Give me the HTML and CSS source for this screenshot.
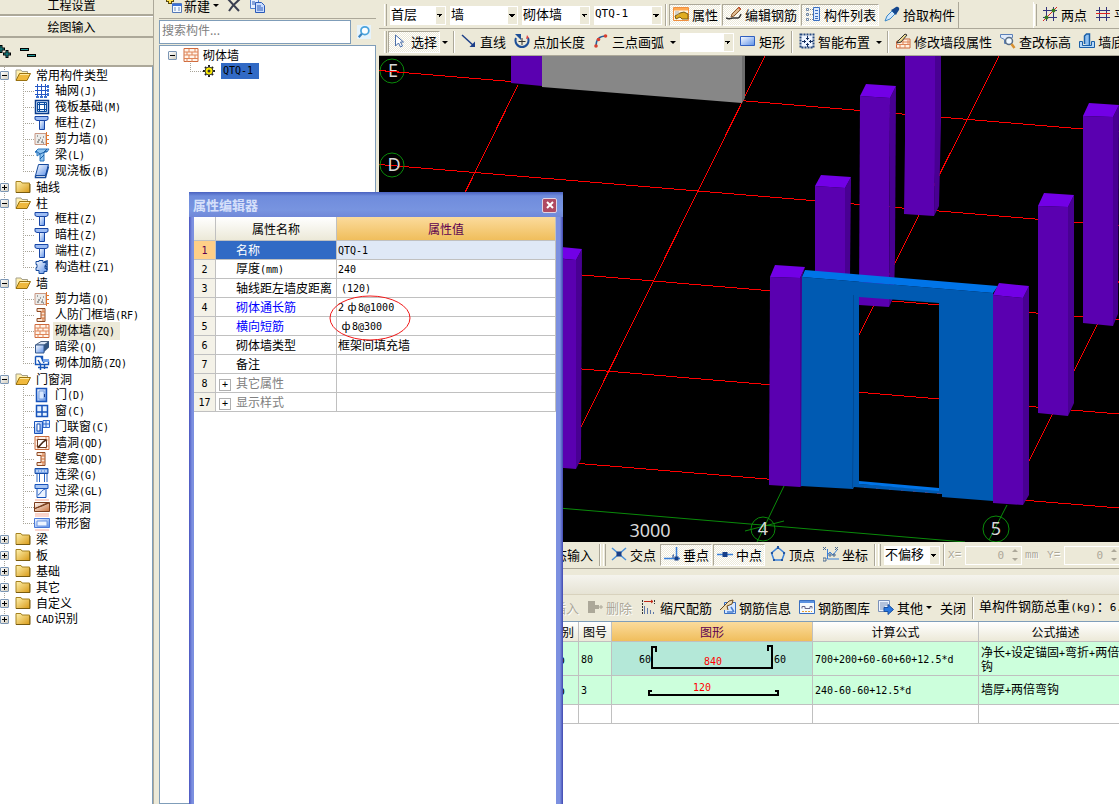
FILE: index.html
```
<!DOCTYPE html>
<html lang="zh-CN">
<head>
  <meta charset="UTF-8">
  <meta name="viewport" content="width=device-width, initial-scale=1.0">
  <title>绘图输入</title>
  <link rel="stylesheet" href="styles.css">
</head>
<body>
  <svg class="defs" aria-hidden="true">
    <defs>
      <linearGradient id="gold" x1="0" y1="0" x2="1" y2="1"><stop offset="0" stop-color="#fff3b0"/><stop offset="1" stop-color="#d89a18"/></linearGradient>
      <linearGradient id="blue" x1="0" y1="0" x2="1" y2="1"><stop offset="0" stop-color="#ffffff"/><stop offset="1" stop-color="#5a8fe8"/></linearGradient>
      <linearGradient id="brown" x1="0" y1="0" x2="1" y2="1"><stop offset="0" stop-color="#ffffff"/><stop offset="1" stop-color="#c8703a"/></linearGradient>
    </defs>
    <symbol id="folder" viewBox="0 0 16 16"><path d="M1 4V2.500h5l1 1.500h7.500v9.500H1z" fill="url(#gold)" stroke="#a5811f"/><path d="M1 13.500h14V5" fill="none" stroke="#7a5c10"/></symbol>
    <symbol id="folder-open" viewBox="0 0 16 16"><path d="M1 13V3h5l1 1.500h5.500V7" fill="#fff0b0" stroke="#a5a08a"/><path d="M1 13.500L4.500 6.500H15.500L12 13.500z" fill="#f0b93c" stroke="#9a7210"/><path d="M5 7.500h9" stroke="#ffe9a0"/></symbol>
    <symbol id="axis" viewBox="0 0 16 16"><path d="M3.500 1v13M7.500 1v13M11.500 1v13M1 3.500h12M1 7.500h12M1 11.500h12" stroke="#2457c5" fill="none"/><path d="M13 2h2v3h-2zM13 6h2v3h-2zM13 10h2v3h-2zM2 13h3v2H2zM6 13h3v2H6zM10 13h3v2h-3z" fill="#3a6fd0"/></symbol>
    <symbol id="raft" viewBox="0 0 16 16"><path d="M1.500 1.500h13v13h-13z" fill="#d9e8fc" stroke="#0a3c8c" stroke-width="1.500"/><path d="M5.500 3v10M10.500 3v10M3 5.500h10M3 10.500h10M3.500 3.500h9v9h-9z" fill="none" stroke="#0a4ca0"/><path d="M6 6h4v4H6z" fill="#fff"/></symbol>
    <symbol id="column" viewBox="0 0 16 16"><path d="M1 1.500h13v3l-2 1H3l-2-1z" fill="#9cbcf4" stroke="#1745a5"/><path d="M5.500 5.500h5v9h-5z" fill="url(#blue)" stroke="#1745a5"/></symbol>
    <symbol id="shear" viewBox="0 0 16 16"><path d="M1 2.500h11v11H1z" fill="#ececea" stroke="#c99884"/><path d="M3 5h1M6 7h1M4 9h2M8 9h1M3 11h2M7 11h2M9 6h1M9 12h1" stroke="#555"/><path d="M12.500 1v14M12 4.500h3M12 8.500h3M12 12.500h3" stroke="#e07830"/></symbol>
    <symbol id="beam" viewBox="0 0 16 16"><path d="M1 5l3-3h11l-2 3h-3v9H6V7L3 9V6z" fill="#8ec4f0" stroke="#2c78c0"/><path d="M2 4l4 3 7-3M10 5l3-3M6 12l4-4" fill="none" stroke="#1c60a8"/></symbol>
    <symbol id="slab" viewBox="0 0 16 16"><path d="M4.500 1.500h10l-3 11h-10z" fill="url(#blue)" stroke="#164a9c"/><path d="M1.500 12.500v2h10l3-11" fill="none" stroke="#164a9c" stroke-width="1.500"/></symbol>
    <symbol id="tie-column" viewBox="0 0 16 16"><path d="M5 1.500h4v2h3v3h-1v3h2v3h-3v2H5v-3H2v-3h1v-3H2v-3h3z" fill="url(#blue)" stroke="#174a9c"/><path d="M10 3l3-1v4M11 8l2-1v4" fill="none" stroke="#174a9c" stroke-width="1.500"/></symbol>
    <symbol id="niche" viewBox="0 0 16 16"><path d="M3 1.500h8v13H3v-3h4v-7H3z" fill="#fbe3d0" stroke="#8f4a24"/><path d="M7 5h4M7 8h4M7 11h4M9 2v3M9 11v3" stroke="#d27038"/></symbol>
    <symbol id="brick" viewBox="0 0 16 16"><path d="M1 1.500h14v13H1z" fill="#fff4ea" stroke="#cf6a3c"/><path d="M1 5h14M1 8h14M1 11.500h14M6 2v3M12 2v3M4 5v3M9 5v3M6 8v3M12 8v3M4 12v3M9 12v3" stroke="#df8558"/></symbol>
    <symbol id="dark-beam" viewBox="0 0 16 16"><path d="M1.500 6L7 2.500h8L10 6z" fill="#dbe6f5" stroke="#4a607e"/><path d="M10 6l5-3.500v6L10 13z" fill="#33547e"/><path d="M1.500 6H10v8H1.500z" fill="url(#blue)" stroke="#35588c"/></symbol>
    <symbol id="masonry-bar" viewBox="0 0 16 16"><path d="M1.500 1.500h7v4h6M1.500 1.500v8h13v-4M4 5l3 5M7 2l3 6M6.500 9v6M10.500 9v5M4 12.500h10" fill="none" stroke="#1554b8" stroke-width="1.400"/><path d="M9 4h6v3H9z" fill="#6fa0ea"/></symbol>
    <symbol id="door" viewBox="0 0 16 16"><path d="M2.500 1.500h10v13h-10z" fill="url(#blue)" stroke="#1753bb" stroke-width="1.500"/><path d="M5 4h5v8H5z" fill="#d8e8ff" stroke="#78a0e0"/><path d="M10.500 7v3" stroke="#173c8c"/></symbol>
    <symbol id="window" viewBox="0 0 16 16"><path d="M2.500 2.500h11v11h-11z" fill="#e6f2ff" stroke="#1753bb" stroke-width="1.500"/><path d="M8 3v10M3 9h10" stroke="#1753bb" stroke-width="1.500"/></symbol>
    <symbol id="door-window" viewBox="0 0 16 16"><path d="M.5 2.500h8v12h-8z" fill="url(#blue)" stroke="#1753bb"/><path d="M3 5h3v7H3z" fill="#fff" stroke="#1753bb"/><path d="M9 1.500h6.500v7H9zM12 2v6M9 5h6" fill="#dbeaff" stroke="#2a66cc"/></symbol>
    <symbol id="wall-hole" viewBox="0 0 16 16"><path d="M1 1.500h14v13H1z" fill="#fff2e8" stroke="#c96c3e"/><path d="M1 5h14M1 11h14M4 2v12M12 2v12" stroke="#e29a74"/><path d="M3.500 4.500h9v8h-9z" fill="#fff" stroke="#6a3a20"/><path d="M4 12c3-1 2-4 8-7" fill="none" stroke="#4a2a18" stroke-width="1.500"/></symbol>
    <symbol id="link-beam" viewBox="0 0 16 16"><path d="M1 1.500h13v5H1z" fill="#77a4e8" stroke="#1a4fa8"/><path d="M2 4h11" stroke="#fff" stroke-dasharray="2 1"/><path d="M3 7v8M5.500 7v8M10.500 7v8M13 7v8" stroke="#2a64c0"/></symbol>
    <symbol id="lintel" viewBox="0 0 16 16"><path d="M1 1.500h13v4H1z" fill="#a9c7f4" stroke="#1753bb"/><path d="M3 5.500h9v9H3z" fill="#eaf3ff" stroke="#1753bb"/><path d="M4 12c3-1 2-4 7-6" fill="none" stroke="#1753bb"/></symbol>
    <symbol id="strip-hole" viewBox="0 0 16 16"><path d="M1 1h14M1 15h14" stroke="#fbd3c8" stroke-width="2"/><path d="M.5 3.500h15v9H.5z" fill="url(#brown)" stroke="#7a3c1c"/><path d="M1 9.500L11 5l4-1.500V4L8 7z" fill="#7a4020" stroke="#7a4020"/></symbol>
    <symbol id="strip-window" viewBox="0 0 16 16"><path d="M1 1h14M1 15h14" stroke="#fbd6d0" stroke-width="2"/><path d="M.5 3.500h15v9H.5z" fill="url(#blue)" stroke="#4a78d8"/><path d="M3 6h10v5H3z" fill="#edf4ff" stroke="#6a94e4"/></symbol>
    <symbol id="gear" viewBox="0 0 12 12"><path d="M6 0v12M0 6h12M2 2l8 8M10 2l-8 8" stroke="#222" stroke-width="2"/><circle cx="6" cy="6" r="4" fill="#ffee00" stroke="#444"/><circle cx="6" cy="6" r="1.500" fill="#333"/></symbol>
    <symbol id="new" viewBox="0 0 18 18"><path d="M6 0v8M2 4h8" stroke="#5a4a10" stroke-width="4"/><path d="M6 0v7M3 4h6" stroke="#ffe14a" stroke-width="2"/><path d="M8.500 7.500h9v9h-9z" fill="#f4f9ff" stroke="#5478b8"/><path d="M8 8h10v2H8z" fill="#3a6fd8"/><path d="M10 12h2m2 0h2M10 14h2m2 0h2" stroke="#6d8cc0"/></symbol>
    <symbol id="delete" viewBox="0 0 14 14"><path d="M1 1l11 12M13 1C8 5 5 8 2 13" stroke="#3a3f50" stroke-width="2" fill="none"/></symbol>
    <symbol id="copy" viewBox="0 0 16 16"><path d="M1.500 1.500h6l2 2v8h-8z" fill="#e7f0ff" stroke="#5080d0"/><path d="M6.500 5.500h6l3 3v7h-9z" fill="#c8dcff" stroke="#2a5ab8"/><path d="M3 5h3M3 7h3M8 9h4M8 11h6M8 13h6" stroke="#2a5ab8"/></symbol>
    <symbol id="search" viewBox="0 0 16 16"><path d="M0 0h16v16H0z" fill="#e6f3fb"/><circle cx="9" cy="6.500" r="4.500" fill="#fff" stroke="#4aa3dc" stroke-width="2"/><path d="M5.500 10L2 14" stroke="#3a83c0" stroke-width="2.500"/></symbol>
    <symbol id="props" viewBox="0 0 16 16"><path d="M.5 1.500h15v13H.5z" fill="#fff6e4" stroke="#f09040"/><path d="M1 2h14v2.500H1z" fill="#ffa850"/><path d="M2 10l5-3 4-1 4 2v5H9L7 11l-4 2z" fill="#e0ac20" stroke="#7a5a10"/><path d="M2 8h4M2 6h4" stroke="#aaa"/></symbol>
    <symbol id="pencil-bar" viewBox="0 0 16 16"><path d="M0 12c4 2 3 0 7 0h5c2 0 2-2 3-4" stroke="#333" fill="none" stroke-width="1.500"/><path d="M5 11l1-3 7-7 2 2-7 7z" fill="#e0bb90" stroke="#8a5a30"/><path d="M12 2l1-1 2 2-1 1z" fill="#e05030"/></symbol>
    <symbol id="list" viewBox="0 0 16 16"><path d="M1.500 2.500h2v2h-2zM1.500 7.500h2v2h-2zM1.500 12.500h2v2h-2z" fill="none" stroke="#7088a8"/><path d="M5 3.500h3M5 8.500h3M5 13.500h3" stroke="#888" stroke-dasharray="1 1"/><path d="M8.500 1.500h6v13h-6z" fill="#dcebff" stroke="#3a6fc0"/><path d="M10 4.500h3M10 7.500h3M10 10.500h3M10 12.500h3" stroke="#3a6fc0"/></symbol>
    <symbol id="dropper" viewBox="0 0 16 16"><path d="M1 15l2-5 5-5 3 3-5 5z" fill="#cfe6fb" stroke="#3a88c8"/><path d="M7 4l5 5 1-2 2-3c1-2-1-4-3-3L9 3z" fill="#15478c"/></symbol>
    <symbol id="two-point" viewBox="0 0 16 16"><path d="M4.500 1v14M11.500 1v14M1 4.500h14M1 11.500h14" stroke="#34347c"/><path d="M1 15L15 1" stroke="#e02020"/><circle cx="11.500" cy="4.500" r="2" fill="#3a7a20"/><circle cx="4.500" cy="11.500" r="2" fill="#3a7a20"/></symbol>
    <symbol id="parallel" viewBox="0 0 16 16"><path d="M4.500 1v14M11.500 1v14" stroke="#34347c"/><path d="M1 4.500h14M1 11.500h14" stroke="#34347c"/><path d="M1 7.500h14" stroke="#e02020"/></symbol>
    <symbol id="cursor" viewBox="0 0 16 16"><path d="M3.500 2v11l3-3 2 4 2-1-2-4h3z" fill="#fff" stroke="#4a6fa8"/></symbol>
    <symbol id="line" viewBox="0 0 16 16"><path d="M1 2l12 11" stroke="#1d3f88" stroke-width="1.500"/><path d="M14 14H8.500L14 8.500z" fill="#1d3f88"/></symbol>
    <symbol id="arc-len" viewBox="0 0 16 16"><path d="M2 5a6.500 6.500 0 1 0 12 0" fill="none" stroke="#1d4f98" stroke-width="2"/><path d="M1 1h6v6z" fill="#1d4f98"/><path d="M8 5v7M4.500 8.500h7" stroke="#333"/><path d="M13 2l2 3-3 1z" fill="#e04040"/></symbol>
    <symbol id="arc3" viewBox="0 0 16 16"><path d="M3 13C3 7 6 3 13 3" fill="none" stroke="#2a5f98" stroke-width="1.500"/><circle cx="12.500" cy="3" r="1.800" fill="#d84030"/><circle cx="5.500" cy="6.500" r="1.800" fill="#d84030"/><circle cx="3" cy="13" r="1.800" fill="#d84030"/></symbol>
    <symbol id="rect" viewBox="0 0 16 16"><path d="M.5 3.500h14v9H.5z" fill="url(#blue)" stroke="#2f5fc0"/></symbol>
    <symbol id="smart" viewBox="0 0 16 16"><path d="M1.500 1.500h13v13h-13z" fill="#eef5ff" stroke="#274a80" stroke-width="2" stroke-dasharray="2 1"/><path d="M8.500 3v4M7 5.500h3M8.500 10v4M7 11.500h3M3 8.500h4M10 8.500h4M5.500 7v3M11.500 7v3" stroke="#173060"/></symbol>
    <symbol id="edit-wall" viewBox="0 0 16 16"><path d="M1.500 8.500L6 6h9v9H1.500z" fill="#fff0e0" stroke="#cf6a3c"/><path d="M1 11.500h14M5 15v-3M10 15v-3M8 11V7M13 11V7M5 9h10" stroke="#df8558"/><path d="M3 8l7-7 2 1-6 7-4 1z" fill="#f0dc90" stroke="#333"/></symbol>
    <symbol id="check-height" viewBox="0 0 16 16"><path d="M.5 1.500h12v3l-4 2v4h-4v-4l-4-2z" fill="#dfeafa" stroke="#5a80b8"/><circle cx="9" cy="8" r="3.500" fill="#f2faff" stroke="#5a6f88" stroke-width="1.500"/><path d="M11.500 11l3 4" stroke="#d89030" stroke-width="2.500"/></symbol>
    <symbol id="wall-base" viewBox="0 0 16 16"><path d="M5.500 11V3l2-2h3v12" fill="#8fc0f0" stroke="#1a5fa8" stroke-width="1.500"/><path d="M.5 14.500v-6h3v4h9v-4h3v6z" fill="#b4d8f8" stroke="#1a5fa8"/></symbol>
    <symbol id="cross" viewBox="0 0 16 16"><path d="M1 2l14 12M15 2L1 14" stroke="#4a90d8" stroke-width="1.500"/><path d="M5.500 5.500h5v5h-5z" fill="#173f88"/></symbol>
    <symbol id="perp" viewBox="0 0 16 16"><path d="M12.500 1v12M0 12.500h16" stroke="#3a80d8" stroke-width="1.500"/><path d="M10.500 10.500h4v4h-4z" fill="#173f88"/><path d="M10 9h-1v3" fill="none" stroke="#173f88"/></symbol>
    <symbol id="mid" viewBox="0 0 16 16"><path d="M0 8.500h16" stroke="#3a80d8" stroke-width="1.500"/><path d="M5.500 6h5v5h-5z" fill="#173f88"/></symbol>
    <symbol id="vertex" viewBox="0 0 16 16"><path d="M8 1.500l6.500 5.500-2.500 7H4L1.500 7z" fill="none" stroke="#3a80d8" stroke-width="1.500"/><path d="M7 0h2v3H7zM13 6h2v2h-2zM1 6h2v2H1zM3 13h2v2H3zM11 13h2v2h-2z" fill="#24549c"/></symbol>
    <symbol id="coord" viewBox="0 0 16 16"><path d="M4.500 3v10H16M4 9l3-3 3 3 4-5" fill="none" stroke="#3a80d8"/><path d="M0 1l3 3M3 1L0 4M0 12h3v3H0zM12 1l3 3M15 1l-3 3M6 8h2v2H6zM10 8h2v2h-2z" fill="none" stroke="#4a6a90"/></symbol>
    <symbol id="remove" viewBox="0 0 16 16"><path d="M1 2h7v4h4v4H8v4H1z" fill="#aca899"/><path d="M12 8h4M14 6v4" stroke="#aca899"/></symbol>
    <symbol id="scale" viewBox="0 0 16 16"><path d="M3.500 7v8M6.500 9v6M9.500 11v4M12.500 13v2" stroke="#5f78a8"/><path d="M3 2.500h9M10 1l2 1.500L10 4" fill="none" stroke="#c02818"/><path d="M1.500 1v14M13.500 1v4" stroke="#333" stroke-dasharray="2 1"/></symbol>
    <symbol id="bar-info" viewBox="0 0 16 16"><path d="M4.500 3.500h11v11h-11z" fill="#d8e8ff" stroke="#3a6fc0"/><path d="M0 11L9 2l4-1-1 4-5 2 1 4" fill="#f0dcb0" stroke="#6a4a20"/><path d="M7 13h6M11 8l3 5" stroke="#4a7fd0" stroke-width="1.500"/></symbol>
    <symbol id="bar-lib" viewBox="0 0 16 16"><path d="M.5 1.500h15v13H.5z" fill="#f4f9ff" stroke="#3a6fc0"/><path d="M1 2h14v2H1z" fill="#5a90e0"/><path d="M3 9.500v-2h3v2h5v-2h2v2" fill="none" stroke="#668"/><path d="M3 12.500h10" stroke="#e8a030" stroke-dasharray="2 1"/></symbol>
    <symbol id="other" viewBox="0 0 16 16"><path d="M.5 1.500h11v11H.5z" fill="#edf4ff" stroke="#7a90b8"/><path d="M2 4h8M2 6h8M2 8h5M2 10h4" stroke="#7a90b8"/><path d="M6 8.500h4V5.500l5.500 5-5.500 5V12.500H6z" fill="#2a78e0" stroke="#1a4fa0"/></symbol>
  </svg>

  <div class="app">
    <nav class="modules">
      <button class="module-btn module-top">工程设置</button>
      <button class="module-btn">绘图输入</button>
      <div class="tree-tools">
        <button aria-label="全部展开"><svg width="12" height="16" viewBox="0 0 12 16"><path d="M1 1v8M-3 5h8M7 6v8M3 10h8" stroke="#000" stroke-width="3"/><path d="M1 2v6M-2 5h6M7 7v6M4 10h6" stroke="#1c9a9a" stroke-width="1"/></svg></button>
        <button aria-label="全部折叠"><svg width="18" height="12" viewBox="0 0 18 12"><path d="M1 3.500h9M8 9.500h9" stroke="#000" stroke-width="3"/><path d="M2 3.500h7M9 9.500h7" stroke="#1c9a9a" stroke-width="1"/></svg></button>
      </div>
      <ul class="tree">
        <li>
          <div class="row"><button class="exp minus" aria-label="折叠"></button><svg class="ic"><use href="#folder-open"/></svg><span>常用构件类型</span></div>
          <ul>
            <li><svg class="ic"><use href="#axis"/></svg><span>轴网<i>(J)</i></span></li>
            <li><svg class="ic"><use href="#raft"/></svg><span>筏板基础<i>(M)</i></span></li>
            <li><svg class="ic"><use href="#column"/></svg><span>框柱<i>(Z)</i></span></li>
            <li><svg class="ic"><use href="#shear"/></svg><span>剪力墙<i>(Q)</i></span></li>
            <li><svg class="ic"><use href="#beam"/></svg><span>梁<i>(L)</i></span></li>
            <li><svg class="ic"><use href="#slab"/></svg><span>现浇板<i>(B)</i></span></li>
          </ul>
        </li>
        <li><div class="row"><button class="exp" aria-label="展开"></button><svg class="ic"><use href="#folder"/></svg><span>轴线</span></div></li>
        <li>
          <div class="row"><button class="exp minus" aria-label="折叠"></button><svg class="ic"><use href="#folder-open"/></svg><span>柱</span></div>
          <ul>
            <li><svg class="ic"><use href="#column"/></svg><span>框柱<i>(Z)</i></span></li>
            <li><svg class="ic"><use href="#column"/></svg><span>暗柱<i>(Z)</i></span></li>
            <li><svg class="ic"><use href="#column"/></svg><span>端柱<i>(Z)</i></span></li>
            <li><svg class="ic"><use href="#tie-column"/></svg><span>构造柱<i>(Z1)</i></span></li>
          </ul>
        </li>
        <li>
          <div class="row"><button class="exp minus" aria-label="折叠"></button><svg class="ic"><use href="#folder-open"/></svg><span>墙</span></div>
          <ul>
            <li><svg class="ic"><use href="#shear"/></svg><span>剪力墙<i>(Q)</i></span></li>
            <li><svg class="ic"><use href="#niche"/></svg><span>人防门框墙<i>(RF)</i></span></li>
            <li><svg class="ic"><use href="#brick"/></svg><span class="current">砌体墙<i>(ZQ)</i></span></li>
            <li><svg class="ic"><use href="#dark-beam"/></svg><span>暗梁<i>(Q)</i></span></li>
            <li><svg class="ic"><use href="#masonry-bar"/></svg><span>砌体加筋<i>(ZQ)</i></span></li>
          </ul>
        </li>
        <li>
          <div class="row"><button class="exp minus" aria-label="折叠"></button><svg class="ic"><use href="#folder-open"/></svg><span>门窗洞</span></div>
          <ul>
            <li><svg class="ic"><use href="#door"/></svg><span>门<i>(D)</i></span></li>
            <li><svg class="ic"><use href="#window"/></svg><span>窗<i>(C)</i></span></li>
            <li><svg class="ic"><use href="#door-window"/></svg><span>门联窗<i>(C)</i></span></li>
            <li><svg class="ic"><use href="#wall-hole"/></svg><span>墙洞<i>(QD)</i></span></li>
            <li><svg class="ic"><use href="#niche"/></svg><span>壁龛<i>(QD)</i></span></li>
            <li><svg class="ic"><use href="#link-beam"/></svg><span>连梁<i>(G)</i></span></li>
            <li><svg class="ic"><use href="#lintel"/></svg><span>过梁<i>(GL)</i></span></li>
            <li><svg class="ic"><use href="#strip-hole"/></svg><span>带形洞</span></li>
            <li><svg class="ic"><use href="#strip-window"/></svg><span>带形窗</span></li>
          </ul>
        </li>
        <li><div class="row"><button class="exp" aria-label="展开"></button><svg class="ic"><use href="#folder"/></svg><span>梁</span></div></li>
        <li><div class="row"><button class="exp" aria-label="展开"></button><svg class="ic"><use href="#folder"/></svg><span>板</span></div></li>
        <li><div class="row"><button class="exp" aria-label="展开"></button><svg class="ic"><use href="#folder"/></svg><span>基础</span></div></li>
        <li><div class="row"><button class="exp" aria-label="展开"></button><svg class="ic"><use href="#folder"/></svg><span>其它</span></div></li>
        <li><div class="row"><button class="exp" aria-label="展开"></button><svg class="ic"><use href="#folder"/></svg><span>自定义</span></div></li>
        <li><div class="row"><button class="exp" aria-label="展开"></button><svg class="ic"><use href="#folder"/></svg><span><i>CAD</i>识别</span></div></li>
      </ul>
    </nav>

    <section class="parts">
      <div class="parts-tools">
        <button class="parts-new"><svg width="18" height="18"><use href="#new"/></svg>新建<span class="arrow"></span></button>
        <button aria-label="删除"><svg width="14" height="14"><use href="#delete"/></svg></button>
        <button aria-label="复制"><svg width="16" height="16"><use href="#copy"/></svg></button>
      </div>
      <div class="search">
        <input type="text" placeholder="搜索构件..." aria-label="搜索构件">
        <button aria-label="搜索"><svg width="14" height="14"><use href="#search"/></svg></button>
      </div>
      <ul class="parts-tree">
        <li class="parts-root"><button class="exp minus" aria-label="折叠"></button><svg class="ic"><use href="#brick"/></svg><span>砌体墙</span></li>
        <li class="parts-leaf"><svg width="12" height="12"><use href="#gear"/></svg><span class="picked"><i>QTQ-1</i></span></li>
      </ul>
    </section>

    <main class="work">
      <div class="bar bar-top">
        <span class="grip"></span>
        <select class="combo combo-floor" aria-label="楼层"><option>首层</option></select>
        <select class="combo" aria-label="构件类别"><option>墙</option></select>
        <select class="combo" aria-label="构件类型"><option>砌体墙</option></select>
        <select class="combo combo-en" aria-label="构件"><option>QTQ-1</option></select>
        <span class="sep"></span>
        <div class="tools">
          <button class="tool on"><svg class="ic"><use href="#props"/></svg>属性</button>
          <button class="tool on"><svg class="ic"><use href="#pencil-bar"/></svg>编辑钢筋</button>
          <button class="tool on"><svg class="ic"><use href="#list"/></svg>构件列表</button>
          <button class="tool"><svg class="ic"><use href="#dropper"/></svg>拾取构件</button>
        </div>
        <span class="bar-end"></span>
        <span class="grip"></span>
        <div class="tools">
          <button class="tool"><svg class="ic"><use href="#two-point"/></svg>两点</button>
          <button class="tool"><svg class="ic"><use href="#parallel"/></svg>平行</button>
        </div>
      </div>
      <div class="bar">
        <span class="grip"></span>
        <button class="tool on"><svg class="ic"><use href="#cursor"/></svg>选择</button>
        <button class="drop" aria-label="选择方式"><span class="arrow"></span></button>
        <span class="sep"></span>
        <div class="tools">
          <button class="tool"><svg class="ic"><use href="#line"/></svg>直线</button>
          <button class="tool"><svg class="ic"><use href="#arc-len"/></svg>点加长度</button>
          <button class="tool"><svg class="ic"><use href="#arc3"/></svg>三点画弧</button>
          <button class="drop" aria-label="画弧方式"><span class="arrow"></span></button>
        </div>
        <select class="combo combo-arc" aria-label="弧半径"><option></option></select>
        <button class="tool"><svg class="ic"><use href="#rect"/></svg>矩形</button>
        <span class="sep"></span>
        <div class="tools">
          <button class="tool"><svg class="ic"><use href="#smart"/></svg>智能布置</button>
          <button class="drop" aria-label="布置方式"><span class="arrow"></span></button>
        </div>
        <span class="sep"></span>
        <div class="tools">
          <button class="tool"><svg class="ic"><use href="#edit-wall"/></svg>修改墙段属性</button>
          <button class="tool"><svg class="ic"><use href="#check-height"/></svg>查改标高</button>
          <button class="tool"><svg class="ic"><use href="#wall-base"/></svg>墙底标高</button>
        </div>
      </div>

      <svg class="model" viewBox="379 56 740 486" role="img" aria-label="三维模型">
        <g class="axis-red">
          <path d="M379 70.500L1119 132M379 164.500L1119 226M379 258L1119 320M379 352L1119 414M379 447L1119 508"/>
          <path d="M518 85L420 284M765 56L581 427M999 56L859 335M1119 281L1029 461"/>
        </g>
        <g class="axis-green">
          <path d="M379 493L965 542M784 486L757 542M745 531l39-10M1007 505L989 540"/>
          <circle cx="392" cy="71" r="12"/><circle cx="392" cy="165" r="12"/><circle cx="763" cy="529" r="12"/><circle cx="996" cy="529" r="13"/>
        </g>
        <g class="axis-text">
          <text x="393" y="77">E</text><text x="394" y="171">D</text><text x="763" y="535">4</text><text x="996" y="535">5</text><text x="650" y="537">3000</text>
        </g>
        <path class="axis-red" d="M379 70.500L405 72.500"/>
        <path fill="#878787" d="M542 56h200v47L542 87z"/>
        <path fill="#6e6e6e" d="M742 56h3v42l-3 5z"/>
        <g class="front">
          <path d="M511 56h31v30l-31-3z"/>
          <path d="M905 56h31v72l-2 88-30-2 1-73z"/>
          <path d="M860 96l30 2-1 209-30-2z"/>
          <path d="M815 186l30 2v90l-30-3z"/>
          <path d="M540 257l36 3v209l-36-3z"/>
          <path d="M1083 116l30 1v209l-30-3z"/>
          <path d="M1038 206l30 1v209l-30-3z"/>
          <path d="M770 277l30 1v209l-31-2z"/>
        </g>
        <g class="side">
          <path d="M935 56h6v66l-2 84-5 10 1-88z"/>
          <path d="M890 98l6-12-1 170-1 40-5 11z"/>
          <path d="M845 188l6-11-1 100h-5z"/>
          <path d="M576 260l6-11-1 210-5 10z"/>
          <path d="M1113 117l6-12-1 209-5 12z"/>
          <path d="M1068 207l6-12v208l-6 13z"/>
          <path d="M800 278l5-11-3 10v209l-2 1z"/>
        </g>
        <g class="cap">
          <path d="M860 96l6-12 30 2-6 12z"/>
          <path d="M815 186l6-11 30 2-6 11z"/>
          <path d="M545 257l6-11 31 3-6 11z"/>
          <path d="M1083 116l6-13 30 2-6 12z"/>
          <path d="M1038 206l6-13 30 2-6 12z"/>
          <path d="M770 277l5-12 30 2-5 11z"/>
        </g>
        <path fill="#005ab2" d="M802 277l191 16v208l-51-4v-3l-88-7-1 2-52-3zM859 297v187l80 6V303z" fill-rule="evenodd"/>
        <path fill="#0074e8" d="M805 270l193 16-5 7-191-16zM859 481l80 7v3l-80-7z"/>
        <path fill="none" stroke="#004a96" d="M853.500 295v113l-1 80"/>
        <path class="front" d="M993 295l30 3v207l-30-2z"/>
        <path class="side" d="M1023 298l6-12v209l-6 10z"/>
        <path class="cap" d="M993 295l6-12 30 3-6 12z"/>
      </svg>

      <div class="bar bar-snap">
        <button class="tool">动态输入</button>
        <span class="sep"></span>
        <span class="grip"></span>
        <div class="tools">
          <button class="tool"><svg class="ic"><use href="#cross"/></svg>交点</button>
          <button class="tool on"><svg class="ic"><use href="#perp"/></svg>垂点</button>
          <button class="tool on"><svg class="ic"><use href="#mid"/></svg>中点</button>
          <button class="tool"><svg class="ic"><use href="#vertex"/></svg>顶点</button>
          <button class="tool"><svg class="ic"><use href="#coord"/></svg>坐标</button>
        </div>
        <span class="sep"></span>
        <span class="grip"></span>
        <select class="combo combo-floor" aria-label="偏移方式"><option>不偏移</option></select>
        <span class="sep"></span>
        <label class="offset" for="offX">X=</label>
        <span class="spin"><input id="offX" type="text" value="0" disabled><span class="spin-btns"></span></span>
        <span class="offset">mm</span>
        <label class="offset offset-y" for="offY">Y=</label>
        <span class="spin"><input id="offY" type="text" value="0" disabled><span class="spin-btns"></span></span>
      </div>

      <div class="detail-title"></div>
      <div class="bar bar-detail">
        <div class="tools">
          <button class="tool" disabled>插入</button>
          <button class="tool" disabled><svg class="ic"><use href="#remove"/></svg>删除</button>
        </div>
        <div class="tools">
          <button class="tool"><svg class="ic"><use href="#scale"/></svg>缩尺配筋</button>
          <button class="tool"><svg class="ic"><use href="#bar-info"/></svg>钢筋信息</button>
          <button class="tool"><svg class="ic"><use href="#bar-lib"/></svg>钢筋图库</button>
          <button class="tool"><svg class="ic"><use href="#other"/></svg>其他<span class="arrow"></span></button>
          <button class="tool">关闭</button>
        </div>
        <span class="sep"></span>
        <span class="weight">单构件钢筋总重<i>(kg)</i>：<i>6.2</i></span>
      </div>
      <div class="detail">
        <table class="bars">
          <colgroup><col class="c-name"><col class="c-small"><col class="c-small"><col class="c-shape"><col class="c-formula"><col class="c-desc"></colgroup>
          <thead>
            <tr><th>筋号</th><th>级别</th><th>图号</th><th class="hot">图形</th><th>计算公式</th><th>公式描述</th></tr>
          </thead>
          <tbody>
            <tr class="tall">
              <td></td><td class="grade">ф</td><td><i>80</i></td>
              <td class="shape picked-cell"><svg viewBox="0 0 200 32"><path d="M44 9V4h-4v21h120V3h-4v5" /><text x="27" y="20">60</text><text x="162" y="20">60</text><text class="len" x="92" y="22">840</text></svg></td>
              <td><i>700+200+60-60+60+12.5*d</i></td>
              <td>净长<i>+</i>设定锚固<i>+</i>弯折<i>+</i>两倍弯<br>钩</td>
            </tr>
            <tr class="mid">
              <td></td><td class="grade">ф</td><td><i>3</i></td>
              <td class="shape"><svg viewBox="0 0 200 28"><path d="M40 15h-3v4h129v-4h-3"/><text class="len" x="81" y="15">120</text></svg></td>
              <td><i>240-60-60+12.5*d</i></td>
              <td>墙厚<i>+</i>两倍弯钩</td>
            </tr>
            <tr class="blank"><td></td><td></td><td></td><td></td><td></td><td></td></tr>
          </tbody>
        </table>
      </div>
    </main>
  </div>

  <section class="dialog" role="dialog" aria-labelledby="dlgTitle">
    <header class="dialog-head">
      <h2 id="dlgTitle">属性编辑器</h2>
      <button class="dialog-close" aria-label="关闭"><svg width="8" height="8" viewBox="0 0 8 8"><path d="M1 1l6 6M7 1L1 7" stroke="#fff" stroke-width="2"/></svg></button>
    </header>
    <div class="dialog-body">
      <table class="props">
        <colgroup><col class="p-no"><col class="p-name"><col></colgroup>
        <thead><tr><th></th><th>属性名称</th><th class="hot">属性值</th></tr></thead>
        <tbody>
          <tr class="active"><th>1</th><td>名称</td><td><i>QTQ-1</i></td></tr>
          <tr><th>2</th><td>厚度<i>(mm)</i></td><td><i>240</i></td></tr>
          <tr><th>3</th><td>轴线距左墙皮距离</td><td><i class="lead">(120)</i></td></tr>
          <tr class="key"><th>4</th><td>砌体通长筋</td><td><i>2</i><b>ф</b><i>8@1000</i></td></tr>
          <tr class="key"><th>5</th><td>横向短筋</td><td><b>ф</b><i>8@300</i></td></tr>
          <tr><th>6</th><td>砌体墙类型</td><td>框架间填充墙</td></tr>
          <tr><th>7</th><td>备注</td><td></td></tr>
          <tr class="group"><th>8</th><td><button aria-label="展开">+</button>其它属性</td><td></td></tr>
          <tr class="group"><th>17</th><td><button aria-label="展开">+</button>显示样式</td><td></td></tr>
        </tbody>
      </table>
    </div>
    <svg class="mark" viewBox="0 0 84 48"><ellipse cx="42" cy="24" rx="40" ry="22" fill="none" stroke="#f01818"/></svg>
  </section>
</body>
</html>
```
FILE: styles.css
```
* {
  box-sizing: border-box;
}
body {
  margin: 0;
  height: 100vh;
  overflow: hidden;
  position: relative;
  background: #ece9d8;
  color: #000;
  font: 12px/16px "Noto Sans CJK SC", sans-serif;
}
button, input, select {
  font-family: inherit;
  font-size: inherit;
  color: inherit;
  margin: 0;
  padding: 0;
  border: 0;
  background: none;
}
svg {
  display: block;
  flex: none;
}
i {
  font-family: "DejaVu Sans Mono", monospace;
  font-size: 10px;
  font-style: normal;
}
ul {
  list-style: none;
  margin: 0;
  padding: 0;
}
.defs {
  position: absolute;
  width: 0;
  height: 0;
}
.ic {
  width: 16px;
  height: 16px;
}
.app {
  display: flex;
  height: 100%;
}
.arrow {
  border: 3px solid transparent;
  border-top-color: #000;
  border-bottom: 0;
}

/* module navigation */
.modules {
  flex: none;
  width: 154px;
  display: flex;
  flex-direction: column;
  border-right: 1px solid #aca899;
}
.module-btn {
  height: 22px;
  padding-right: 10px;
  border-bottom: 2px solid #aca899;
  border-top: 1px solid #fff;
  line-height: 18px;
}
.module-top {
  height: 16px;
  border-top: 0;
  line-height: 8px;
  padding-bottom: 4px;
}
.tree-tools {
  display: flex;
  gap: 7px;
  align-items: center;
  height: 27px;
  flex: none;
}
.tree {
  flex: 1;
  background: #fff;
  border-top: 2px solid #aca899;
  border-right: 1px solid #7f9db9;
  white-space: nowrap;
}
.tree > li {
  background: repeating-linear-gradient(#a8a498 0 1px, transparent 1px 2px) 4px 0 / 1px 100% no-repeat;
}
.tree > li:last-child {
  background-size: 1px 8px;
}
.row {
  display: flex;
  align-items: center;
  height: 16px;
}
.exp {
  width: 9px;
  height: 9px;
  border: 1px solid #7b96b5;
  border-radius: 1px;
  background: linear-gradient(#000, #000) center / 5px 1px no-repeat, linear-gradient(#000, #000) center / 1px 5px no-repeat, linear-gradient(135deg, #fff, #d2cdbe);
}
.exp.minus {
  background: linear-gradient(#000, #000) center / 5px 1px no-repeat, linear-gradient(135deg, #fff, #d2cdbe);
}
.row .ic {
  margin: 0 5px 0 6px;
}
.tree ul {
  padding-left: 23px;
  background: repeating-linear-gradient(#a8a498 0 1px, transparent 1px 2px) 23px 0 / 1px calc(100% - 8px) no-repeat;
}
.tree ul li {
  display: flex;
  align-items: center;
  height: 16px;
}
.tree ul li::before {
  content: "";
  width: 11px;
  border-top: 1px dotted #a8a498;
}
.tree ul span {
  margin-left: 3px;
  padding: 0 5px 0 2px;
}
.tree .current {
  background: #ece9d8;
}

/* component list */
.parts {
  flex: none;
  width: 217px;
  margin: 0 3px 0 5px;
  display: flex;
  flex-direction: column;
}
.parts-tools {
  display: flex;
  align-items: center;
  gap: 8px;
  height: 19px;
  padding: 0 0 8px 5px;
  border-bottom: 1px solid #aca899;
  font-size: 13px;
}
.parts-new {
  display: flex;
  align-items: center;
  gap: 2px;
}
.parts-new .arrow {
  margin-left: 1px;
}
.search {
  display: flex;
  height: 26px;
  padding: 1px 0;
}
.search input {
  flex: 1;
  min-width: 0;
  padding: 0 2px 5px;
  background: #fff;
  border: 1px solid #7f9db9;
}
.search input::placeholder {
  color: #808080;
  opacity: 1;
}
.search button {
  width: 25px;
  padding-left: 6px;
}
.parts-tree {
  flex: 1;
  background: #fff;
  border: 1px solid #7f9db9;
  padding: 1px 0 0 8px;
}
.parts-root, .parts-leaf {
  display: flex;
  align-items: center;
  height: 16px;
}
.parts-root .ic {
  margin: 0 4px 0 6px;
}
.parts-leaf {
  padding-left: 22px;
}
.parts-leaf::before {
  content: "";
  align-self: flex-start;
  width: 12px;
  height: 8px;
  border-left: 1px dotted #a8a498;
  border-bottom: 1px dotted #a8a498;
}
.picked {
  display: flex;
  align-items: center;
  height: 16px;
  background: #316ac5;
  padding: 0 6px 0 2px;
  margin-left: 6px;
}

/* toolbars */
.work {
  flex: 1;
  min-width: 0;
  display: flex;
  flex-direction: column;
  overflow: hidden;
}
.bar {
  display: flex;
  align-items: center;
  flex: none;
  height: 27px;
  padding-left: 5px;
  border-bottom: 1px solid #aca899;
  font-size: 13px;
  white-space: nowrap;
}
.bar > * {
  flex: none;
}
.bar-top {
  height: 29px;
  padding-top: 2px;
}
.tools {
  display: flex;
  gap: 1px;
}
.grip {
  width: 3px;
  height: 22px;
  margin-right: 1px;
  border-left: 1px solid #fff;
  border-right: 1px solid #aca899;
}
.sep {
  width: 2px;
  height: 22px;
  margin: 0 2px 0 3px;
  border-left: 1px solid #aca899;
  border-right: 1px solid #fff;
}
.tool {
  display: flex;
  align-items: center;
  gap: 3px;
  height: 22px;
  padding: 0 2px 2px 3px;
  border: 1px solid transparent;
  white-space: nowrap;
}
.tool.on {
  border-color: #aca899 #fff #fff #aca899;
  background: repeating-conic-gradient(#fff 0 25%, #ece9d8 0 50%) 0 0 / 2px 2px;
}
.tool:disabled {
  color: #aca899;
  text-shadow: 1px 1px #fff;
}
.drop {
  width: 10px;
  height: 22px;
  padding-left: 2px;
}
.drop .arrow {
  display: block;
  width: 6px;
}
.combo {
  appearance: none;
  width: 68px;
  height: 19px;
  padding: 0 12px 2px 1px;
  margin-left: 4px;
  border-radius: 0;
  line-height: 16px;
  background:
    linear-gradient(45deg, transparent 50%, #000 50%) right 6px center / 3px 3px no-repeat,
    linear-gradient(-45deg, transparent 50%, #000 50%) right 3px center / 3px 3px no-repeat,
    linear-gradient(#ece9d8, #ece9d8) right 1px center / 9px 17px no-repeat,
    #fff;
}
.grip + .combo {
  margin-left: 2px;
}
.combo-floor {
  width: 56px;
}
.combo-en {
  font-family: "DejaVu Sans Mono", monospace;
  font-size: 11px;
}
.combo-arc {
  width: 54px;
  margin: 0 2px;
}
.bar-end {
  width: 76px;
  height: 26px;
  border-left: 1px solid #aca899;
  border-right: 1px solid #fff;
}

.model {
  width: 100%;
  height: auto;
  background: #000;
}
.axis-red {
  fill: none;
  stroke: #f00;
  shape-rendering: crispEdges;
}
.axis-green {
  fill: none;
  stroke: #0a8a0a;
}
.axis-text {
  fill: #d8d8d8;
  font: 18px "Noto Sans", sans-serif;
  text-anchor: middle;
}
.front {
  fill: #5a00b0;
}
.side {
  fill: #480092;
}
.cap {
  fill: #7200e6;
}

/* snap bar, padded past the floating property window */
.bar-snap {
  padding-left: 158px;
}
.offset {
  width: 18px;
  padding-left: 1px;
  color: #aca899;
  font: 11px/16px "Liberation Mono", monospace;
  text-shadow: 1px 1px #fff;
}
.offset-y {
  margin-left: 4px;
}
.spin {
  display: flex;
  align-items: center;
  width: 57px;
  height: 19px;
  border: 1px solid #fff;
  margin-right: 2px;
}
.spin input {
  flex: 1;
  min-width: 0;
  padding-right: 8px;
  text-align: right;
  color: #aca899;
  font: 11px "DejaVu Sans Mono", monospace;
}
.spin-btns {
  width: 6px;
  height: 13px;
  margin-right: 3px;
}
.spin-btns::before, .spin-btns::after {
  content: "";
  display: block;
  border: 3px solid transparent;
  border-bottom-color: #aca899;
  border-top: 0;
}
.spin-btns::after {
  margin-top: 6px;
  border-top: 3px solid #aca899;
  border-bottom: 0;
}

/* rebar detail */
.detail-title {
  flex: none;
  height: 26px;
  border-top: 6px solid #ece9d8;
  border-bottom: 1px solid #d8d2bd;
  background: linear-gradient(#f5f4ee, #e6e3d4);
}
.bar-detail {
  padding-left: 170px;
  border-bottom-color: #7f9db9;
}
.bar-detail .tools + .tools {
  margin-left: 2px;
}
.weight {
  margin-left: 3px;
  padding-bottom: 2px;
}
.weight i {
  font-size: 11px;
}
.detail {
  flex: 1;
  background: #fff;
  overflow: hidden;
}
table {
  border-collapse: separate;
  border-spacing: 0;
  table-layout: fixed;
}
th {
  font-weight: normal;
}
th, td {
  padding: 0;
  border-right: 1px solid #c0c0c0;
  border-bottom: 1px solid #c0c0c0;
}
thead th {
  background: linear-gradient(#fff, #ece9d8);
}
thead .hot {
  background: linear-gradient(#fbdb9c, #f0be5c);
  color: #5c0050;
}
.bars {
  width: 754px;
}
.bars th {
  height: 20px;
}
.bars td {
  background: #ccffdc;
  padding-left: 2px;
  line-height: 12px;
}
.c-name {
  width: 167px;
}
.c-formula {
  width: 166px;
}
.c-small {
  width: 33px;
}
.c-shape {
  width: 201px;
}
.tall td {
  height: 34px;
}
.mid td {
  height: 29px;
}
.bars .blank td {
  height: 19px;
  background: #fff;
}
.bars .grade {
  padding-left: 9px;
}
.bars .shape {
  padding: 0;
}
.bars .picked-cell {
  background: #b4e8d8;
}
.shape svg {
  width: 100%;
}
.shape path {
  fill: none;
  stroke: #000;
  stroke-width: 2;
}
.shape text {
  font: 10px "DejaVu Sans Mono", monospace;
}
.shape .len {
  fill: #f00;
}

/* floating property window */
.dialog {
  position: absolute;
  left: 189px;
  top: 192px;
  bottom: 0;
  width: 374px;
  display: flex;
  flex-direction: column;
  padding: 0 5px;
  background: linear-gradient(90deg, #4a55c0 0, #7c90e0 3px, #7c90e0 371px, #4048b0 100%);
}
.dialog-head {
  display: flex;
  align-items: center;
  justify-content: space-between;
  height: 25px;
  flex: none;
  margin: 0 -5px;
  padding: 1px 6px 0 4px;
  background: linear-gradient(#4a62c0 0, #6f8cdc 4px, #7894e0 18px, #7088d8 100%);
}
.dialog-head h2 {
  margin: 0;
  font-size: 13px;
  line-height: 20px;
  color: #d6e0fa;
}
.dialog-close {
  width: 15px;
  height: 15px;
  padding-left: 3px;
  border: 1px solid #e0d4e4;
  border-radius: 2px;
  background: #b04a62;
}
.dialog-body {
  flex: 1;
  margin-right: 2px;
  background: #fff;
}
.props {
  width: 362px;
  max-width: 100%;
}
.p-no {
  width: 22px;
}
.p-name {
  width: 121px;
}
.props thead th {
  height: 24px;
}
.props tbody th, .props td {
  height: 19px;
}
.props tbody th {
  background: #f4f2e8;
  font: 10px "DejaVu Sans Mono", monospace;
}
.props td {
  padding-left: 20px;
  white-space: nowrap;
}
.props td:last-child {
  padding-left: 1px;
  color: #000;
}
.props b {
  display: inline-block;
  width: 12px;
  margin-left: 2px;
  font-weight: normal;
  font-size: 11px;
  text-align: center;
}
.props .lead {
  margin-left: 3px;
}
.props .active th {
  background: #ffcf88;
  color: #5c0050;
}
.active td {
  background: #316ac5;
  color: #fff;
}
.active td:last-child {
  background: #dfe8f6;
}
.key td {
  color: #00f;
}
.props .group td {
  color: #808080;
  padding-left: 3px;
}
.group button {
  width: 12px;
  height: 12px;
  margin-right: 5px;
  border: 1px solid #b0b0b0;
  color: #000;
  font: 10px/9px "DejaVu Sans Mono", monospace;
}
.mark {
  position: absolute;
  left: 139px;
  top: 102px;
  width: 84px;
}
```
